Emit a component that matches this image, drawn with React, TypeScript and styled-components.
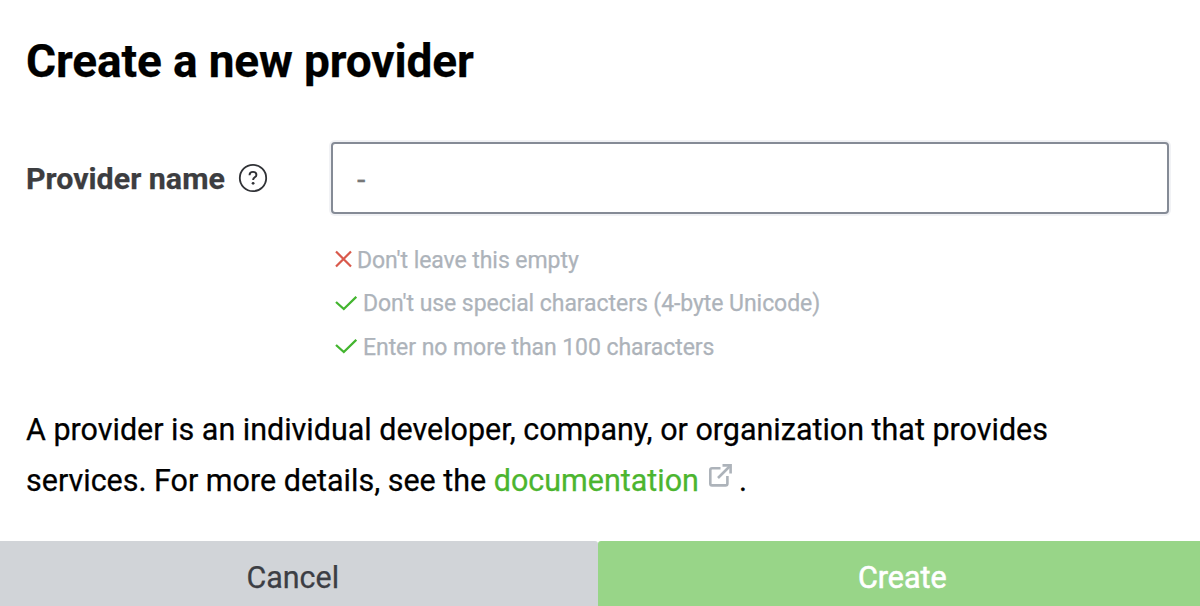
import React from "react";
import styled, { createGlobalStyle } from "styled-components";

const GlobalStyle = createGlobalStyle`
  * { box-sizing: border-box; }
  body { margin: 0; background: #fff; font-family: Roboto, sans-serif; color: #000; overflow: hidden; }
`;

const Dialog = styled.form`
  display: flex;
  flex-direction: column;
  width: 1200px;
  height: 606px;
  overflow: hidden;
  -webkit-text-stroke: 0.25px currentColor;
`;

const Content = styled.div`
  flex: 1;
  padding: 34px 31px 0 26px;
`;

const Title = styled.h1`
  margin: 0;
  font-size: 46px;
  line-height: 54px;
  font-weight: 700;
  letter-spacing: -0.13px;
  white-space: nowrap;
`;

const Field = styled.div`
  display: grid;
  grid-template-columns: 305px 1fr;
  margin-top: 54px;
`;

const Label = styled.label`
  display: flex;
  align-items: center;
  height: 72px;
  gap: 13px;
  font-size: 30.4px;
  font-weight: 700;
  color: #3c3d40;
  white-space: nowrap;
`;

const NameInput = styled.input`
  display: block;
  width: 100%;
  height: 72px;
  padding: 2px 24px 0;
  border: 2px solid #858b96;
  border-radius: 4px;
  outline: none;
  box-shadow: 0 0 0 2px #f1f2f5;
  font: 400 30.4px Roboto, sans-serif;
  color: #777;
`;

const Rules = styled.ul`
  margin: 24px 0 0;
  padding: 0 0 0 4px;
  list-style: none;
`;

const Rule = styled.li<{ $gap: number }>`
  display: flex;
  align-items: center;
  gap: ${({ $gap }) => $gap}px;
  height: 43.5px;
  padding-top: 1px;
  font-size: 23px;
  letter-spacing: -0.06px;
  color: #adb3ba;
  white-space: nowrap;

  svg {
    margin-top: -2px;
  }
`;

const Description = styled.p`
  margin: 35px 0 0;
  font-size: 30.48px;
  line-height: 51px;
  white-space: nowrap;
`;

const DocLink = styled.a`
  color: #4cb52f;
`;

const Actions = styled.div`
  display: grid;
  grid-template-columns: 597.5px 1fr;
  height: 65px;
`;

const Action = styled.button<{ $primary?: boolean }>`
  border: 0;
  border-radius: ${({ $primary }) => ($primary ? "3px 0 0 0" : "0 3px 0 0")};
  padding: ${({ $primary }) => ($primary ? "7px 0 0 7px" : "7px 12px 0 0")};
  font: 400 30.45px Roboto, sans-serif;
  -webkit-text-stroke: ${({ $primary }) => ($primary ? "0.6px" : "0.25px")} currentColor;
  background: ${({ $primary }) => ($primary ? "#98d588" : "#d1d4d8")};
  color: ${({ $primary }) => ($primary ? "#fff" : "#3c3e44")};
`;

const HelpIcon = () => (
  <svg width="30" height="30" viewBox="0 0 30 30" fill="none">
    <circle cx="15" cy="15" r="13.2" stroke="#303236" strokeWidth="1.8" />
    <path d="M11.5 12.2c.1-2.1 1.5-3.3 3.5-3.3 2.1 0 3.4 1.2 3.4 3 0 2.4-3.3 2.5-3.3 5" stroke="#303236" strokeWidth="1.9" />
    <circle cx="15.1" cy="20.3" r="1.4" fill="#303236" />
  </svg>
);

const CrossIcon = () => (
  <svg width="17" height="18" viewBox="0 0 17 18" fill="none" stroke="#d9594c" strokeWidth="2.2">
    <path d="M1 1.5 16 16.5M16 1.5 1 16.5" />
  </svg>
);

const CheckIcon = () => (
  <svg width="22" height="18" viewBox="0 0 22 18" fill="none" stroke="#43b52f" strokeWidth="2.3">
    <path d="M1 8 8.8 15 21.3 2.8" />
  </svg>
);

const ExternalIcon = styled.svg`
  margin: 0 7px 0 10px;
  vertical-align: 4px;
`;

export default function App() {
  return (
    <>
      <GlobalStyle />
      <Dialog onSubmit={(e) => e.preventDefault()}>
        <Content>
          <Title>Create a new provider</Title>
          <Field>
            <Label htmlFor="provider-name">
              Provider name
              <HelpIcon />
            </Label>
            <div>
              <NameInput id="provider-name" defaultValue="-" />
              <Rules>
                <Rule $gap={5}><CrossIcon />Don't leave this empty</Rule>
                <Rule $gap={6}><CheckIcon />Don't use special characters (4-byte Unicode)</Rule>
                <Rule $gap={6}><CheckIcon />Enter no more than 100 characters</Rule>
              </Rules>
            </div>
          </Field>
          <Description>
            A provider is an individual developer, company, or organization that provides
            <br />
            services. For more details, see the <DocLink>documentation</DocLink>
            <ExternalIcon width="23" height="23" viewBox="0 0 23 23" fill="none" stroke="#adb3ba" strokeWidth="2.6">
              <path d="M11.5 4.2H3Q1.3 4.2 1.3 6V19.5Q1.3 21.4 3 21.4H16.5Q18.4 21.4 18.4 19.5V12M9 14 20.5 2.5" />
              <path d="M13.5 1.4H21.6V9.5" />
            </ExternalIcon>
            .
          </Description>
        </Content>
        <Actions>
          <Action type="button">Cancel</Action>
          <Action type="submit" $primary>Create</Action>
        </Actions>
      </Dialog>
    </>
  );
}
